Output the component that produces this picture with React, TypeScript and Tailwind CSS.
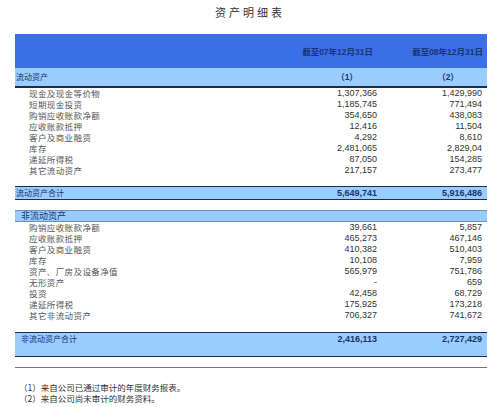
const current = [
  ['现金及现金等价物', '1,307,366', '1,429,990'],
  ['短期现金投资', '1,185,745', '771,494'],
  ['购销应收账款净额', '354,650', '438,083'],
  ['应收账款抵押', '12,416', '11,504'],
  ['客户及商业融资', '4,292', '8,610'],
  ['库存', '2,481,065', '2,829,04'],
  ['递延所得税', '87,050', '154,285'],
  ['其它流动资产', '217,157', '273,477'],
];

const nonCurrent = [
  ['购销应收账款净额', '39,661', '5,857'],
  ['应收账款抵押', '465,273', '467,146'],
  ['客户及商业融资', '410,382', '510,403'],
  ['库存', '10,108', '7,959'],
  ['资产、厂房及设备净值', '565,979', '751,786'],
  ['无形资产', '-', '659'],
  ['投资', '42,458', '68,729'],
  ['递延所得税', '175,925', '173,218'],
  ['其它非流动资产', '706,327', '741,672'],
];

const cjk = "font-['Noto_Sans_CJK_SC',sans-serif]";
const num = "font-['Liberation_Sans','Noto_Sans_CJK_SC',sans-serif]";

function DataRow({ label, a, b }: { label: string; a: string; b: string }) {
  return (
    <div className="flex h-[11px] items-center">
      <div className={`flex-1 pl-[14px] text-[8.5px] tracking-[0.4px] leading-[11px] text-[#555] ${cjk}`}>{label}</div>
      <div className={`w-[87px] pr-[10px] text-right text-[9px] leading-[11px] text-[#333] ${num}`}>{a}</div>
      <div className={`w-[100px] pr-[5px] text-right text-[9px] leading-[11px] text-[#333] ${num}`}>{b}</div>
    </div>
  );
}

export default function App() {
  return (
    <div className="w-[500px] h-[407px] bg-white overflow-hidden">
      <div className={`h-[34px] pt-[6px] text-center text-[11px] leading-[13px] tracking-[3px] text-[#333] ${cjk}`}>
        资产明细表
      </div>

      <div className="mx-[15px] w-[472px]">
        {/* header */}
        <div className="flex h-[34px] items-end bg-[#3b6fe8] pb-[11px]">
          <div className="flex-1" />
          <div className={`w-[87px] pr-[14px] text-right text-[8.5px] font-bold leading-[10px] text-[#1a3570] ${num}`}>截至07年12月31日</div>
          <div className={`w-[100px] pr-[4px] text-right text-[8.5px] font-bold leading-[10px] text-[#1a3570] ${num}`}>截至08年12月31日</div>
        </div>
        <div className="flex h-[18px] items-center bg-[#99ccff] border-b-2 border-[#1f2d4d] box-content">
          <div className={`flex-1 pl-[1px] text-[8px] leading-[10px] text-[#1a3570] ${cjk}`}>流动资产</div>
          <div className={`w-[87px] pl-[7px] text-center text-[8.5px] font-bold leading-[10px] text-[#1a3570] ${num}`}>（1）</div>
          <div className={`w-[100px] pl-[22px] text-center text-[8.5px] font-bold leading-[10px] text-[#1a3570] ${num}`}>（2）</div>
        </div>

        {current.map(([l, a, b]) => (
          <DataRow key={l} label={l} a={a} b={b} />
        ))}

        <div className="h-[10px]" />
        <div className="flex h-[12px] items-center bg-[#99ccff] border-y border-[#1f2d4d] box-content">
          <div className={`flex-1 pl-[1px] text-[8px] leading-[10px] text-[#1a3570] ${cjk}`}>流动资产合计</div>
          <div className={`w-[87px] pr-[10px] text-right text-[9px] font-bold leading-[10px] text-[#1a3570] ${num}`}>5,649,741</div>
          <div className={`w-[100px] pr-[5px] text-right text-[9px] font-bold leading-[10px] text-[#1a3570] ${num}`}>5,916,486</div>
        </div>

        <div className="h-[10px]" />
        <div className="flex h-[10px] items-center bg-[#99ccff] border-y border-[#6f8fb8] box-content">
          <div className={`flex-1 pl-[6px] text-[9px] leading-[10px] text-[#1a3570] ${cjk}`}>非流动资产</div>
        </div>

        {nonCurrent.map(([l, a, b]) => (
          <DataRow key={l + a} label={l} a={a} b={b} />
        ))}

        <div className="h-[11px]" />
        <div className="flex h-[22px] items-start bg-[#99ccff] border-y border-[#1f2d4d] box-content pt-[1px]">
          <div className={`flex-1 pl-[6px] text-[8px] leading-[10px] text-[#1a3570] ${cjk}`}>非流动资产合计</div>
          <div className={`w-[87px] pr-[10px] text-right text-[9px] font-bold leading-[10px] text-[#1a3570] ${num}`}>2,416,113</div>
          <div className={`w-[100px] pr-[5px] text-right text-[9px] font-bold leading-[10px] text-[#1a3570] ${num}`}>2,727,429</div>
        </div>
        <div className="h-[10px] border-b border-[#777] box-content" />
      </div>

      <div className={`mt-[14px] pl-[19px] text-[8.5px] leading-[10.5px] text-[#333] ${cjk}`}>
        <div>（1）来自公司已通过审计的年度财务报表。</div>
        <div>（2）来自公司尚未审计的财务资料。</div>
      </div>
    </div>
  );
}
